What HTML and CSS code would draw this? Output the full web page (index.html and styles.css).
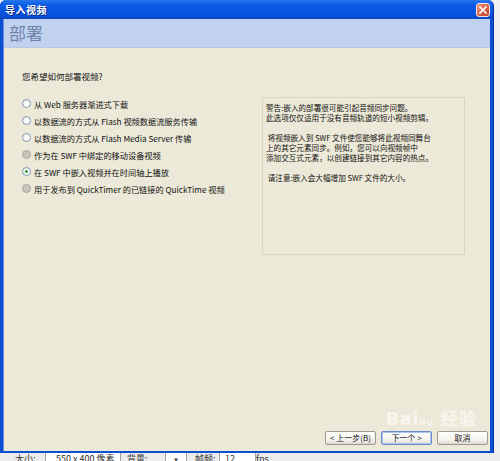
FILE: index.html
```html
<!DOCTYPE html>
<html lang="zh-CN">
<head>
<meta charset="utf-8">
<title>导入视频</title>
<link rel="stylesheet" href="styles.css">
</head>
<body>
<div class="window">
  <div class="titlebar">
    <span class="title">导入视频</span>
    <span class="close"><svg width="8" height="8" viewBox="0 0 8 8"><path d="M1 1L7 7M7 1L1 7" stroke="#fff" stroke-width="1.6" stroke-linecap="square"/></svg></span>
  </div>
  <div class="client">
    <div class="header">部署</div>
    <div class="content">
      <div class="question">您希望如何部署视频?</div>
      <div class="row">
        <div class="options">
          <label class="opt"><span class="radio"></span>从 Web 服务器渐进式下载</label>
          <label class="opt"><span class="radio"></span>以数据流的方式从 Flash 视频数据流服务传输</label>
          <label class="opt"><span class="radio"></span>以数据流的方式从 Flash Media Server 传输</label>
          <label class="opt"><span class="radio disabled"></span>作为在 SWF 中绑定的移动设备视频</label>
          <label class="opt"><span class="radio checked"></span>在 SWF 中嵌入视频并在时间轴上播放</label>
          <label class="opt"><span class="radio disabled"></span>用于发布到 QuickTimer 的已链接的 QuickTime 视频</label>
        </div>
        <div class="info">
          <p>警告:嵌入的部署很可能引起音频同步问题。<br>此选项仅仅适用于没有音频轨道的短小视频剪辑。</p>
          <p>&nbsp;将视频嵌入到 SWF 文件使您能够将此视频同舞台<br>上的其它元素同步。例如，您可以向视频帧中<br>添加交互式元素，以创建链接到其它内容的热点。</p>
          <p>&nbsp;请注意:嵌入会大幅增加 SWF 文件的大小。</p>
        </div>
      </div>
      <div class="buttons">
        <span class="btn">&lt; 上一步(B)</span>
        <span class="btn default">下一个 &gt;</span>
        <span class="btn">取消</span>
      </div>
      <div class="watermark">Bai<span class="paw">du</span> 经验</div>
    </div>
  </div>
</div>
<div class="status">
  <span class="s1">大小:</span>
  <span class="field f1">550 x 400 像素</span>
  <span class="s2">背景:</span>
  <span class="field f2">▾</span>
  <span class="s3">帧频:</span>
  <span class="field f3">12</span>
  <span class="s4">fps</span>
</div>
</body>
</html>
```
FILE: styles.css
```css
html, body {
  margin: 0;
  padding: 0;
}
body {
  width: 500px;
  height: 461px;
  overflow: hidden;
  background: #eef0f2;
  font-family: "Noto Sans CJK SC", "DejaVu Sans", sans-serif;
  color: #111;
}
.window {
  width: 494px;
  height: 453px;
  box-sizing: border-box;
  display: flex;
  flex-direction: column;
  background: #0a4fd4;
  border-radius: 6px 6px 0 0;
  padding: 0 3px 2px 3px;
  border-right: 1px solid #08309a;
}
.titlebar {
  height: 19px;
  flex: none;
  display: flex;
  align-items: center;
  justify-content: space-between;
  background: linear-gradient(#2a78f0 0%, #0b5ce6 25%, #0753de 70%, #0a48c4 100%);
  margin: 0 -3px;
  padding-left: 5px;
  padding-right: 3px;
  border-radius: 6px 6px 0 0;
}
.title {
  color: #fff;
  font-size: 10px;
  font-weight: bold;
  letter-spacing: 0.5px;
  text-shadow: 1px 1px 0 #0a2a80;
}
.close {
  width: 14px;
  height: 14px;
  box-sizing: border-box;
  border: 1px solid #f4e6e0;
  border-radius: 3px;
  background: linear-gradient(135deg, #ec9a7c, #d55d3e 60%, #c4482c);
  display: flex;
  align-items: center;
  justify-content: center;
}
.client {
  flex: 1;
  display: flex;
  flex-direction: column;
  background: #ece9d8;
  border-left: 1px solid #6c8fe0;
}
.header {
  height: 28px;
  flex: none;
  background: #c1d2ee;
  border-bottom: 1px solid #b8c6e0;
  color: #7084ad;
  font-size: 17px;
  line-height: 28px;
  padding-left: 5px;
}
.content {
  flex: 1;
  display: flex;
  flex-direction: column;
  position: relative;
  padding: 22px 2px 6px 18px;
}
.question {
  font-size: 8.5px;
  line-height: 12px;
  height: 12px;
}
.row {
  display: flex;
  margin-top: 13px;
}
.options {
  width: 240px;
  display: flex;
  flex-direction: column;
}
.opt {
  height: 17px;
  display: flex;
  align-items: center;
  gap: 3px;
  font-size: 8.2px;
  white-space: nowrap;
}
.radio {
  width: 9px;
  height: 9px;
  box-sizing: border-box;
  border-radius: 50%;
  border: 1px solid #7f9db9;
  background: radial-gradient(circle at 60% 60%, #ffffff 30%, #dcdad0 100%);
  display: flex;
  align-items: center;
  justify-content: center;
  flex: none;
}
.radio.disabled {
  border-color: #a8a8a0;
  background: #c8c6bc;
}
.radio.checked::after {
  content: "";
  width: 3px;
  height: 3px;
  border-radius: 50%;
  background: #2fa12f;
}
.info {
  margin-top: 2px;
  width: 203px;
  height: 158px;
  box-sizing: border-box;
  border: 1px solid #d9d6c8;
  border-radius: 2px;
  padding: 5px 3px;
  font-size: 7.6px;
  line-height: 10px;
  white-space: nowrap;
}
.info p {
  margin: 0 0 10px 0;
}
.buttons {
  margin-top: auto;
  display: flex;
  justify-content: flex-end;
  gap: 5px;
}
.btn {
  width: 51px;
  height: 14px;
  box-sizing: border-box;
  border: 1px solid #9a9a94;
  border-radius: 2px;
  background: linear-gradient(#ffffff, #f2f1ea 70%, #dcdad0);
  font-size: 8px;
  line-height: 12px;
  text-align: center;
  white-space: nowrap;
}
.btn.default {
  border-color: #6a8cc8;
  box-shadow: inset 0 0 0 1px #aac4ee;
}
.watermark {
  position: absolute;
  left: 382px;
  top: 357px;
  color: rgba(255, 255, 255, 0.6);
  font-family: "DejaVu Sans", sans-serif;
  font-size: 17px;
  font-weight: bold;
  letter-spacing: 1px;
  white-space: nowrap;
}
.watermark .paw {
  font-size: 9px;
}
.status {
  height: 8px;
  overflow: hidden;
  font-size: 9px;
  line-height: 12px;
  color: #333;
  display: flex;
  background: #ececec;
}
.status span {
  flex: none;
}
.s1 { margin-left: 15px; width: 30px; }
.field {
  background: #fff;
  border-left: 1px solid #a0a0a0;
  border-right: 1px solid #a0a0a0;
}
.f1 { width: 64px; padding-left: 10px; }
.s2 { width: 38px; padding-left: 6px; }
.f2 { width: 20px; text-align: center; font-size: 7px; }
.s3 { width: 24px; padding-left: 8px; }
.f3 { width: 30px; padding-left: 5px; }
.s4 { padding-left: 0; }
```
